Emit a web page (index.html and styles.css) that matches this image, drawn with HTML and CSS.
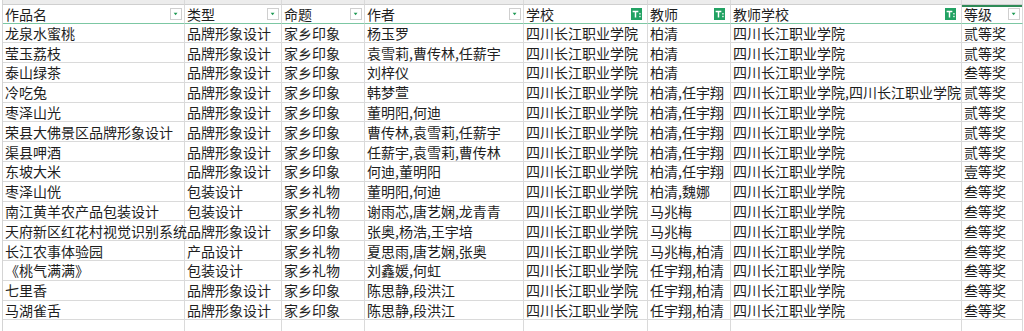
FILE: index.html
```html
<!DOCTYPE html>
<html lang="zh-CN">
<head>
<meta charset="utf-8">
<title>作品清单</title>
<link rel="stylesheet" href="styles.css">
</head>
<body>
<div class="sheet">
  <div class="cell strip"></div><div class="cell strip"></div><div class="cell strip"></div><div class="cell strip"></div><div class="cell strip"></div><div class="cell strip"></div><div class="cell strip"></div><div class="cell strip"></div>

  <div class="cell head"><span>作品名</span><span class="dd"><svg viewBox="0 0 12 12"><path d="M3.2 4.6h4.6L5.5 7.6z" fill="#1f9a55"/></svg></span></div>
  <div class="cell head"><span>类型</span><span class="dd"><svg viewBox="0 0 12 12"><path d="M3.2 4.6h4.6L5.5 7.6z" fill="#1f9a55"/></svg></span></div>
  <div class="cell head"><span>命题</span><span class="dd"><svg viewBox="0 0 12 12"><path d="M3.2 4.6h4.6L5.5 7.6z" fill="#1f9a55"/></svg></span></div>
  <div class="cell head"><span>作者</span><span class="dd"><svg viewBox="0 0 12 12"><path d="M3.2 4.6h4.6L5.5 7.6z" fill="#1f9a55"/></svg></span></div>
  <div class="cell head"><span>学校</span><span class="flt"><svg viewBox="0 0 12 12"><path d="M1.8 2.5h6.2v1.6H5.7v5.8H4.1V4.1H1.8z" fill="#fff"/><rect x="9" y="5" width="1.5" height="1.5" fill="#fff"/><rect x="9" y="8" width="1.5" height="1.5" fill="#fff"/></svg></span></div>
  <div class="cell head"><span>教师</span><span class="flt"><svg viewBox="0 0 12 12"><path d="M1.8 2.5h6.2v1.6H5.7v5.8H4.1V4.1H1.8z" fill="#fff"/><rect x="9" y="5" width="1.5" height="1.5" fill="#fff"/><rect x="9" y="8" width="1.5" height="1.5" fill="#fff"/></svg></span></div>
  <div class="cell head"><span>教师学校</span><span class="flt"><svg viewBox="0 0 12 12"><path d="M1.8 2.5h6.2v1.6H5.7v5.8H4.1V4.1H1.8z" fill="#fff"/><rect x="9" y="5" width="1.5" height="1.5" fill="#fff"/><rect x="9" y="8" width="1.5" height="1.5" fill="#fff"/></svg></span></div>
  <div class="cell head active"><span>等级</span><span class="dd"><svg viewBox="0 0 12 12"><path d="M3.2 4.6h4.6L5.5 7.6z" fill="#1f9a55"/></svg></span></div>

  <div class="cell">龙泉水蜜桃</div><div class="cell">品牌形象设计</div><div class="cell">家乡印象</div><div class="cell">杨玉罗</div><div class="cell">四川长江职业学院</div><div class="cell">柏清</div><div class="cell">四川长江职业学院</div><div class="cell">贰等奖</div>
  <div class="cell">莹玉荔枝</div><div class="cell">品牌形象设计</div><div class="cell">家乡印象</div><div class="cell">袁雪莉,曹传林,任薪宇</div><div class="cell">四川长江职业学院</div><div class="cell">柏清</div><div class="cell">四川长江职业学院</div><div class="cell">贰等奖</div>
  <div class="cell">泰山绿茶</div><div class="cell">品牌形象设计</div><div class="cell">家乡印象</div><div class="cell">刘梓仪</div><div class="cell">四川长江职业学院</div><div class="cell">柏清</div><div class="cell">四川长江职业学院</div><div class="cell">叁等奖</div>
  <div class="cell">冷吃兔</div><div class="cell">品牌形象设计</div><div class="cell">家乡印象</div><div class="cell">韩梦萱</div><div class="cell">四川长江职业学院</div><div class="cell">柏清,任宇翔</div><div class="cell">四川长江职业学院,四川长江职业学院</div><div class="cell">贰等奖</div>
  <div class="cell">枣泽山光</div><div class="cell">品牌形象设计</div><div class="cell">家乡印象</div><div class="cell">董明阳,何迪</div><div class="cell">四川长江职业学院</div><div class="cell">柏清,任宇翔</div><div class="cell">四川长江职业学院</div><div class="cell">贰等奖</div>
  <div class="cell">荣县大佛景区品牌形象设计</div><div class="cell">品牌形象设计</div><div class="cell">家乡印象</div><div class="cell">曹传林,袁雪莉,任薪宇</div><div class="cell">四川长江职业学院</div><div class="cell">柏清,任宇翔</div><div class="cell">四川长江职业学院</div><div class="cell">贰等奖</div>
  <div class="cell">渠县呷酒</div><div class="cell">品牌形象设计</div><div class="cell">家乡印象</div><div class="cell">任薪宇,袁雪莉,曹传林</div><div class="cell">四川长江职业学院</div><div class="cell">柏清,任宇翔</div><div class="cell">四川长江职业学院</div><div class="cell">贰等奖</div>
  <div class="cell">东坡大米</div><div class="cell">品牌形象设计</div><div class="cell">家乡印象</div><div class="cell">何迪,董明阳</div><div class="cell">四川长江职业学院</div><div class="cell">柏清,任宇翔</div><div class="cell">四川长江职业学院</div><div class="cell">壹等奖</div>
  <div class="cell">枣泽山侊</div><div class="cell">包装设计</div><div class="cell">家乡礼物</div><div class="cell">董明阳,何迪</div><div class="cell">四川长江职业学院</div><div class="cell">柏清,魏娜</div><div class="cell">四川长江职业学院</div><div class="cell">叁等奖</div>
  <div class="cell">南江黄羊农产品包装设计</div><div class="cell">包装设计</div><div class="cell">家乡礼物</div><div class="cell">谢雨芯,唐艺娴,龙青青</div><div class="cell">四川长江职业学院</div><div class="cell">马兆梅</div><div class="cell">四川长江职业学院</div><div class="cell">叁等奖</div>
  <div class="cell">天府新区红花村视觉识别系统</div><div class="cell">品牌形象设计</div><div class="cell">家乡印象</div><div class="cell">张奥,杨浩,王宇培</div><div class="cell">四川长江职业学院</div><div class="cell">马兆梅</div><div class="cell">四川长江职业学院</div><div class="cell">叁等奖</div>
  <div class="cell">长江农事体验园</div><div class="cell">产品设计</div><div class="cell">家乡礼物</div><div class="cell">夏思雨,唐艺娴,张奥</div><div class="cell">四川长江职业学院</div><div class="cell">马兆梅,柏清</div><div class="cell">四川长江职业学院</div><div class="cell">叁等奖</div>
  <div class="cell">《桃气满满》</div><div class="cell">包装设计</div><div class="cell">家乡礼物</div><div class="cell">刘鑫媛,何虹</div><div class="cell">四川长江职业学院</div><div class="cell">任宇翔,柏清</div><div class="cell">四川长江职业学院</div><div class="cell">叁等奖</div>
  <div class="cell">七里香</div><div class="cell">品牌形象设计</div><div class="cell">家乡印象</div><div class="cell">陈思静,段洪江</div><div class="cell">四川长江职业学院</div><div class="cell">任宇翔,柏清</div><div class="cell">四川长江职业学院</div><div class="cell">叁等奖</div>
  <div class="cell">马湖雀舌</div><div class="cell">品牌形象设计</div><div class="cell">家乡印象</div><div class="cell">陈思静,段洪江</div><div class="cell">四川长江职业学院</div><div class="cell">任宇翔,柏清</div><div class="cell">四川长江职业学院</div><div class="cell">叁等奖</div>
  <div class="cell"></div><div class="cell"></div><div class="cell"></div><div class="cell"></div><div class="cell"></div><div class="cell"></div><div class="cell"></div><div class="cell"></div>
</div>
</body>
</html>
```

FILE: styles.css
```css
html, body {
  margin: 0;
  padding: 0;
  background: #ffffff;
  overflow: hidden;
}

body {
  font-family: "Noto Sans CJK SC", "Noto Sans", sans-serif;
  font-size: 14px;
  color: #1e1e1e;
}

.sheet {
  display: grid;
  grid-template-columns: 182px 97px 83px 159px 124px 83px 231px 61px;
  grid-template-rows: 4.5px 19px repeat(16, 19.8px);
  margin-left: 2px;
  border-left: 1px solid #d4d4d4;
  width: max-content;
}

.cell {
  box-sizing: border-box;
  border-right: 1px solid #dadada;
  border-bottom: 1px solid #dadada;
  padding: 0 0 0 2px;
  white-space: nowrap;
  line-height: 18px;
  display: flex;
  align-items: center;
  min-width: 0;
}

.strip {
  background: #ececec;
  border-bottom-color: #cfcfcf;
}

.head {
  justify-content: space-between;
  border-bottom: 1px solid #7cc7a3;
  padding-right: 2px;
}

.head.active {
  box-shadow: inset 0 2px 0 #2e8b57;
}

.dd {
  display: inline-flex;
  width: 12px;
  height: 12px;
  box-sizing: border-box;
  border: 1px solid #cfcfcf;
  background: #ffffff;
}

.dd svg,
.flt svg {
  width: 100%;
  height: 100%;
  display: block;
}

.flt {
  display: inline-flex;
  width: 11px;
  height: 12px;
  margin-right: 3px;
  background: #22a263;
}
```
